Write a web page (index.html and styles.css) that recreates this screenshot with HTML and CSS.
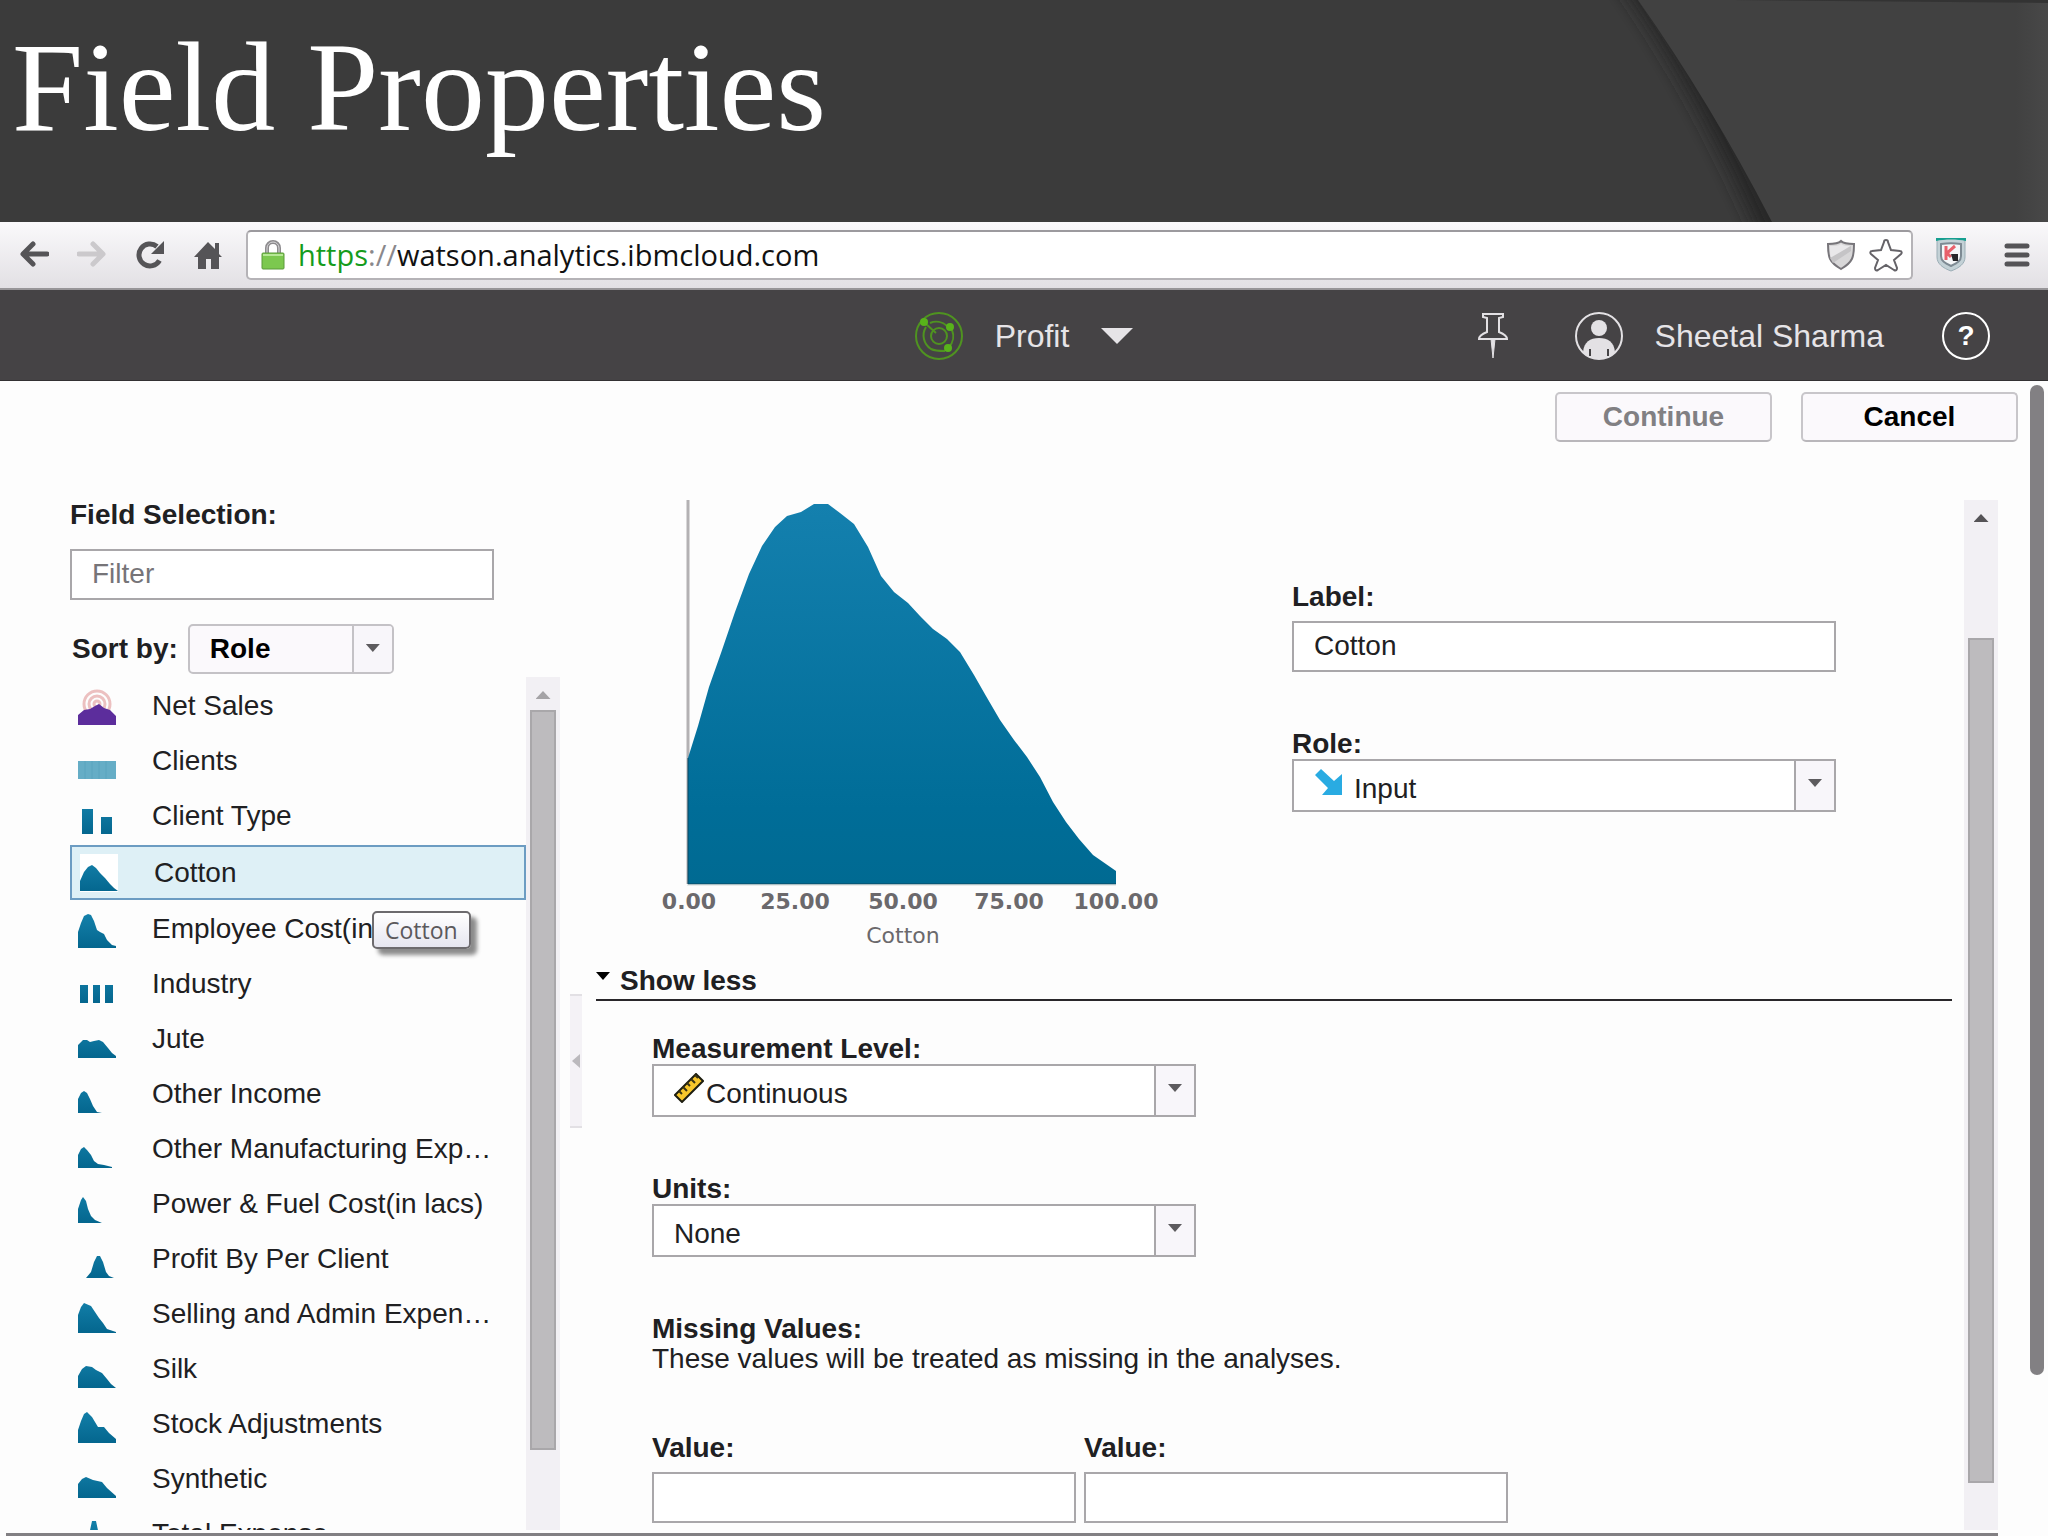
FILE: index.html
```html
<!DOCTYPE html>
<html lang="en">
<head>
<meta charset="utf-8">
<title>Field Properties</title>
<link rel="stylesheet" href="styles.css">
</head>
<body>
<svg class="defs" width="0" height="0" aria-hidden="true">
  <defs>
    <linearGradient id="area" x1="0" y1="0" x2="0" y2="1">
      <stop offset="0" stop-color="#1480ae"/><stop offset="0.8" stop-color="#006d98"/><stop offset="1" stop-color="#006a92"/>
    </linearGradient>
    <linearGradient id="mini" gradientUnits="userSpaceOnUse" x1="0" y1="0" x2="0" y2="38">
      <stop offset="0" stop-color="#1684ae"/><stop offset="1" stop-color="#04668e"/>
    </linearGradient>
  </defs>
</svg>

<header class="title-bar">
  <svg class="title-decor" viewBox="0 0 450 222" aria-hidden="true">
    <defs>
      <filter id="soft" x="-30%" y="-10%" width="160%" height="120%"><feGaussianBlur stdDeviation="9"/></filter>
      <linearGradient id="panel" x1="0" x2="1" y1="0" y2="0"><stop offset="0" stop-color="#414141"/><stop offset="0.92" stop-color="#414141"/><stop offset="1" stop-color="#484848"/></linearGradient>
    </defs>
    <path d="M20 -20 Q100 92 168 250 H240 L100 -20Z" fill="#252525" filter="url(#soft)"/>
    <path d="M40 0 Q112 102 174 222 H450 V0Z" fill="url(#panel)"/>
    <path d="M135 0H450V3Z" fill="#333"/>
  </svg>
  <h1 class="title">Field Properties</h1>
</header>

<nav class="browser-bar" aria-label="Browser">
  <div class="nav-buttons">
    <button class="nav-button" aria-label="Back"><svg width="30" height="28" viewBox="0 0 30 28"><path d="M14 4 4 14l10 10M5 14h23" fill="none" stroke="#555457" stroke-width="5" stroke-linecap="round" stroke-linejoin="round"/></svg></button>
    <button class="nav-button" aria-label="Forward"><svg width="30" height="28" viewBox="0 0 30 28"><path d="M16 4l10 10-10 10M25 14H2" fill="none" stroke="#cbc9cc" stroke-width="5" stroke-linecap="round" stroke-linejoin="round"/></svg></button>
    <button class="nav-button" aria-label="Reload"><svg width="32" height="30" viewBox="0 0 32 30"><path d="M25.500 20.500A11 11 0 1 1 23 6.500" fill="none" stroke="#555457" stroke-width="5"/><path d="M30 1v13H17Z" fill="#555457"/></svg></button>
    <button class="nav-button" aria-label="Home"><svg width="30" height="30" viewBox="0 0 30 30"><path d="M15 2 1 17h4v12h8V19h5v10h8V17h3l-3-3V3h-4v6Z" fill="#555457"/></svg></button>
  </div>
  <div class="address">
    <svg width="24" height="30" viewBox="0 0 24 30" aria-hidden="true"><path d="M6 15V8a6 6 0 0 1 12 0v7" fill="none" stroke="#8d8b8e" stroke-width="4"/><path d="M6 15V8a6 6 0 0 1 12 0v7" fill="none" stroke="#d9d8da" stroke-width="1"/><rect x="1" y="13" width="22" height="16" rx="1" fill="#7cc84f" stroke="#5b9a3b"/><path d="M2 15h20" stroke="#b6e796" stroke-width="2"/></svg>
    <label class="address-prefix" for="url"><span class="secure">https</span><span class="slashes">://</span></label>
    <input class="address-input" id="url" type="text" value="watson.analytics.ibmcloud.com">
    <svg class="shield" width="30" height="32" viewBox="0 0 30 32" aria-hidden="true"><path d="M15 2c3 3 8 3 13 3 0 13-1 18-13 25C3 23 2 18 2 5c5 0 10 0 13-3Z" fill="#d8d7d8" stroke="#77757a" stroke-width="2"/><path d="M15 5c3 2 6 2 9 2L5 20C4 16 4 12 4 7c5 0 8 0 11-2Z" fill="#e9e8ea"/><path d="M4 19 25 7v5L7 24Z" fill="#c5c4c6"/></svg>
    <svg width="34" height="34" viewBox="0 0 34 34" aria-hidden="true"><path d="M17 2c1 0 2 1 2 2l3 8 9 1c2 0 2 2 1 3l-7 6 3 8c0 2-1 3-3 2l-8-5-8 5c-2 1-3 0-3-2l3-8-7-6c-1-1-1-3 1-3l9-1 3-8c0-1 1-2 2-2Z" fill="#fff" stroke="#656368" stroke-width="2"/></svg>
  </div>
  <svg class="extension" width="32" height="36" viewBox="0 0 32 36" aria-hidden="true"><path d="M2 3c8-2 20-2 28 0v17c0 7-6 11-14 14C8 31 2 27 2 20Z" fill="#c3d1d6" stroke="#9aadb5"/><path d="M1 1h30v3c-8-2-22-2-30 0Z" fill="#169f90"/><path d="M6 7c7-1 13-1 20 0v12c0 5-4 7-10 10C10 26 6 24 6 19Z" fill="#f4f6f8" stroke="#7d8a93" stroke-width="2"/><path d="M11 9v14M20 9l-8 7 4 4" fill="none" stroke="#e8606b" stroke-width="3"/><path d="M16 17h7v7h-5Z" fill="#26262a"/></svg>
  <button class="menu-button" aria-label="Menu"><svg width="26" height="26" viewBox="0 0 26 26"><path d="M3 4h20M3 13h20M3 22h20" stroke="#555457" stroke-width="5" stroke-linecap="round"/></svg></button>
</nav>

<header class="app-bar">
  <button class="project">
    <svg width="48" height="48" viewBox="0 0 48 48" aria-hidden="true"><g fill="none" stroke="#4f9320" stroke-width="2"><circle cx="24" cy="24" r="23"/><path d="M11 15a16 16 0 0 0 5 22c4 2 9 2 14 2M15 11a16 16 0 0 1 17 3M37 18a16 16 0 0 1-3 17M11 12l10 9"/><circle cx="24" cy="24" r="8"/></g><g fill="#58b31a"><circle cx="9" cy="10" r="4"/><circle cx="35" cy="15" r="4"/><circle cx="33" cy="36" r="4"/></g></svg>
    <span>Profit</span>
    <svg width="32" height="16" viewBox="0 0 32 16" aria-hidden="true"><path d="M0 0h32L16 16Z" fill="#e6e4e7"/></svg>
  </button>
  <div class="account">
    <button class="icon-button" aria-label="Pin"><svg width="32" height="46" viewBox="0 0 32 46"><path d="M6 1h20v3l-4 1v14c5 2 8 4 8 7H2c0-3 3-5 8-7V5L6 4Z" fill="none" stroke="#e3e1e4" stroke-width="2"/><path d="M14 26h4l-2 19Z" fill="#e3e1e4" stroke="#e3e1e4"/></svg></button>
    <button class="user"><svg width="48" height="48" viewBox="0 0 48 48" aria-hidden="true"><circle cx="24" cy="24" r="23" fill="none" stroke="#e3e1e4" stroke-width="2"/><circle cx="24" cy="16" r="8" fill="#e3e1e4"/><path d="M8 40c1-10 7-14 16-14s15 4 16 14c-4 5-9 7-16 7S12 45 8 40Z" fill="#e3e1e4"/><path d="M15 37v7M33 37v7" stroke="#454345" stroke-width="2"/></svg><span>Sheetal Sharma</span></button>
    <button class="help" aria-label="Help">?</button>
  </div>
</header>

<div class="app">
  <div class="workspace">
    <div class="actions">
      <button class="action" disabled>Continue</button>
      <button class="action">Cancel</button>
    </div>
    <div class="panels">
      <aside class="sidebar">
        <label class="caption" for="filter">Field Selection:</label>
        <input class="text-box filter" id="filter" type="text" placeholder="Filter">
        <div class="sort">
          <label class="caption" for="sort">Sort by:</label>
          <div class="select-box sort-box">
            <select class="select" id="sort"><option>Role</option></select>
            <span class="select-arrow"></span>
          </div>
        </div>
        <div class="list-area">
          <ul class="fields">
            <li><button class="field"><svg class="thumb" viewBox="0 0 38 38"><g fill="none" stroke="#ecc0c0" stroke-width="3"><circle cx="19" cy="17" r="13"/><circle cx="19" cy="17" r="8"/><circle cx="19" cy="17" r="3"/></g><path d="M0 38V28l6-5 6-1 5-3 4-2 5 4 6 2 6 6v9Z" fill="#5c2d9c"/></svg><span class="field-name">Net Sales</span></button></li>
            <li><button class="field"><svg class="thumb" viewBox="0 0 38 38"><path d="M0 19h38v18H0Z" fill="#65adc6"/><path d="M7 19v18M14 19v18M21 19v18M28 19v18" stroke="#5aa4be"/></svg><span class="field-name">Clients</span></button></li>
            <li><button class="field"><svg class="thumb" viewBox="0 0 38 38"><path d="M4 12h11v25H4ZM23 20h11v17H23Z" fill="url(#mini)"/></svg><span class="field-name">Client Type</span></button></li>
            <li><button class="field selected" aria-current="true"><svg class="thumb" viewBox="0 0 38 38"><path d="M0 37V27L4 18 8 13 12 11 16 14 20 19 25 24 30 30 34 34 38 37Z" fill="url(#mini)"/></svg><span class="field-name">Cotton</span></button></li>
            <li><button class="field"><svg class="thumb" viewBox="0 0 38 38"><path d="M0 38V22L3 13 6 6 10 4 13 5 16 11 19 20 22 22 26 24 29 30 34 35 38 36v2Z" fill="url(#mini)"/></svg><span class="field-name">Employee Cost(in lacs)</span>
              <span class="tooltip" role="tooltip">Cotton</span></button></li>
            <li><button class="field"><svg class="thumb" viewBox="0 0 38 38"><path d="M2 20h8v18H2ZM15 20h7v18H15ZM27 20h8v18H27Z" fill="url(#mini)"/></svg><span class="field-name">Industry</span></button></li>
            <li><button class="field"><svg class="thumb" viewBox="0 0 38 38"><path d="M0 38V25L5 20 9 20 12 22 16 21 21 20 25 22 30 28 34 33 38 36v2Z" fill="url(#mini)"/></svg><span class="field-name">Jute</span></button></li>
            <li><button class="field"><svg class="thumb" viewBox="0 0 38 38"><path d="M0 38V24L3 18 6 16 9 18 12 24 15 31 19 37 24 38Z" fill="url(#mini)"/></svg><span class="field-name">Other Income</span></button></li>
            <li><button class="field"><svg class="thumb" viewBox="0 0 38 38"><path d="M0 38V25L3 19 6 17 9 20 13 25 16 31 20 34 26 35 34 37V38Z" fill="url(#mini)"/></svg><span class="field-name">Other Manufacturing Exp…</span></button></li>
            <li><button class="field"><svg class="thumb" viewBox="0 0 38 38"><path d="M0 38V24L3 15 5 12 8 16 10 24 13 31 17 35 24 38Z" fill="url(#mini)"/></svg><span class="field-name">Power &amp; Fuel Cost(in lacs)</span></button></li>
            <li><button class="field"><svg class="thumb" viewBox="0 0 38 38"><path d="M8 38 13 32 16 22 19 16 22 16 25 22 28 32 31 36 36 38Z" fill="url(#mini)"/></svg><span class="field-name">Profit By Per Client</span></button></li>
            <li><button class="field"><svg class="thumb" viewBox="0 0 38 38"><path d="M0 38V20L3 12 6 8 13 11 17 17 21 23 25 28 29 34 38 37v1Z" fill="url(#mini)"/></svg><span class="field-name">Selling and Admin Expen…</span></button></li>
            <li><button class="field"><svg class="thumb" viewBox="0 0 38 38"><path d="M0 38V26L4 19 8 16 14 17 18 20 24 23 29 29 33 34 38 38Z" fill="url(#mini)"/></svg><span class="field-name">Silk</span></button></li>
            <li><button class="field"><svg class="thumb" viewBox="0 0 38 38"><path d="M0 38V25L3 16 6 9 9 7 14 12 17 17 20 22 26 22 31 28 38 34v4Z" fill="url(#mini)"/></svg><span class="field-name">Stock Adjustments</span></button></li>
            <li><button class="field"><svg class="thumb" viewBox="0 0 38 38"><path d="M0 38V24L4 19 8 17 15 20 24 22 29 28 38 36v2Z" fill="url(#mini)"/></svg><span class="field-name">Synthetic</span></button></li>
            <li><button class="field"><svg class="thumb" viewBox="0 0 38 38"><path d="M8 38 11 20 14 6 18 6 21 20 24 38Z" fill="url(#mini)"/></svg><span class="field-name">Total Expense</span></button></li>
          </ul>
          <div class="scroll-track list-track"><span class="scroll-up muted"></span><span class="scroll-thumb"></span><span class="scroll-rest"></span></div>
        </div>
      </aside>

      <button class="splitter" aria-label="Collapse field list"><span class="splitter-arrow"></span></button>

      <main class="details">
        <section class="overview">
          <svg class="chart" width="510" height="466" viewBox="1 1 510 466" role="img" aria-label="Distribution of Cotton">
            <path d="M33 1V385" stroke="#b3b1b3" stroke-width="3"/>
            <path d="M33 385V259L43 227 54 188 66 154 80 113 94 75 107 47 120 28 132 17 146 13 159 5H173L185 14 199 25 213 48 226 77 239 93 253 104 265 117 278 130 292 140 305 153 319 176 331 197 345 221 359 241 372 258 385 278 398 303 411 323 424 340 438 356 461 372V385Z" fill="url(#area)"/>
            <path d="M33 259V385H461" fill="none" stroke="#0b4660" stroke-width="1"/>
            <path d="M32 386H461" stroke="#d3dad9" stroke-width="1"/>
            <g class="ticks" text-anchor="middle">
              <text x="34" y="410">0.00</text><text x="140" y="410">25.00</text><text x="248" y="410">50.00</text><text x="354" y="410">75.00</text><text x="461" y="410">100.00</text>
            </g>
            <text class="axis-name" x="248" y="444" text-anchor="middle">Cotton</text>
          </svg>
          <div class="form identity">
            <div class="entry">
              <label class="caption" for="label">Label:</label>
              <input class="text-box spaced" id="label" type="text" value="Cotton">
            </div>
            <div class="entry">
              <label class="caption" for="role">Role:</label>
              <div class="select-box">
                <svg class="select-icon" width="30" height="28" viewBox="0 0 30 28" aria-hidden="true"><path d="M1 7 7 1l13 12 8-7v21H8l6-7Z" fill="#29abe2"/></svg>
                <select class="select with-icon role-select" id="role"><option>Input</option></select>
                <span class="select-arrow"></span>
              </div>
            </div>
          </div>
        </section>

        <button class="disclosure" aria-expanded="true"><span class="disclosure-arrow"></span>Show less</button>

        <section class="form more">
          <div class="entry">
            <label class="caption" for="level">Measurement Level:</label>
            <div class="select-box">
              <svg class="select-icon" width="30" height="30" viewBox="0 0 30 30" aria-hidden="true"><path d="M1 22 22 1l7 7L8 29Z" fill="#f7c62b" stroke="#1d1d10" stroke-width="2"/><path d="m5 18 3 3m1-7 4 4m0-8 3 3m1-7 4 4m0-8 3 3" stroke="#3a3414" stroke-width="2"/></svg>
              <select class="select with-icon" id="level"><option>Continuous</option></select>
              <span class="select-arrow"></span>
            </div>
          </div>
          <div class="entry">
            <label class="caption" for="units">Units:</label>
            <div class="select-box">
              <select class="select" id="units"><option>None</option></select>
              <span class="select-arrow"></span>
            </div>
          </div>
          <div class="entry">
            <h2 class="caption">Missing Values:</h2>
            <p class="note">These values will be treated as missing in the analyses.</p>
          </div>
          <div class="values">
            <div class="value"><label class="caption" for="value1">Value:</label><input class="text-box spaced" id="value1" type="text"></div>
            <div class="value"><label class="caption" for="value2">Value:</label><input class="text-box spaced" id="value2" type="text"></div>
          </div>
        </section>
      </main>

      <div class="scroll-track details-track"><span class="scroll-up"></span><span class="scroll-gap"></span><span class="scroll-thumb"></span><span class="scroll-rest"></span></div>
    </div>
    <div class="baseline"></div>
  </div>
  <div class="page-scroll"><span class="page-thumb"></span></div>
</div>
</body>
</html>
```
FILE: styles.css
```css
* { box-sizing: border-box; }

body {
  margin: 0;
  height: 100vh;
  display: flex;
  flex-direction: column;
  overflow: hidden;
  background: #fdfdfd;
  color: #202022;
  font: 28px/30px "Liberation Sans", Arial, sans-serif;
}

button, input, select { font: inherit; color: inherit; }
button { margin: 0; padding: 0; border: 0; background: none; }
svg { display: block; flex: none; }
.defs { position: absolute; }

/* Title */
.title-bar {
  position: relative;
  flex: none;
  height: 222px;
  padding: 16px 12px 0;
  background: #3b3b3b;
  overflow: hidden;
}
.title-decor { position: absolute; top: 0; right: 0; height: 222px; }
.title {
  position: relative;
  margin: 0;
  color: #fff;
  font: 128px/142px "Liberation Serif", "Times New Roman", serif;
}

/* Browser bar */
.browser-bar {
  flex: none;
  display: flex;
  align-items: center;
  height: 68px;
  padding: 0 18px 0 5px;
  background: linear-gradient(#faf9fb, #e2e0e4);
  border-bottom: 2px solid #979598;
}
.nav-buttons { display: flex; }
.nav-button { display: flex; justify-content: center; width: 58px; }
.address {
  flex: 1;
  display: flex;
  align-items: center;
  height: 50px;
  margin: 0 22px 0 9px;
  padding: 0 8px 0 13px;
  background: #fff;
  border: 2px solid #b5b3b7;
  border-top-color: #9c9a9e;
  border-radius: 5px;
  font: 29px/40px "Open Sans", "Noto Sans", sans-serif;
}
.address-prefix { margin-left: 13px; }
.secure { color: #159c1c; }
.slashes { color: #8a888c; }
.address-input { flex: 1; min-width: 0; padding: 0; border: 0; background: none; color: #111; }
.shield { margin-right: 13px; }
.extension { margin-right: 37px; }

/* Application bar */
.app-bar {
  flex: none;
  display: grid;
  grid-template-columns: 1fr auto 1fr;
  align-items: center;
  height: 91px;
  padding-top: 2px;
  background: #454345;
  border-bottom: 1px solid #333133;
  color: #e6e4e7;
  font-size: 32px;
  line-height: 40px;
}
.project { grid-column: 2; display: flex; align-items: center; gap: 32px; }
.account { display: flex; justify-content: flex-end; align-items: center; padding-right: 58px; }
.user { display: flex; align-items: center; gap: 32px; margin: 0 58px 0 66px; }
.help {
  width: 48px;
  height: 48px;
  border: 2px solid #fff;
  border-radius: 50%;
  color: #fff;
  font-size: 28px;
  line-height: 44px;
  font-weight: bold;
}

/* Workspace */
.app { flex: 1; min-height: 0; display: flex; }
.workspace { flex: 1; min-width: 0; display: flex; flex-direction: column; }
.actions { flex: none; display: flex; justify-content: flex-end; gap: 29px; padding: 11px 12px 58px 0; }
.action {
  width: 217px;
  height: 50px;
  border: 2px solid #c8c6ca;
  border-bottom-color: #b9b7bb;
  border-radius: 5px;
  background: #fbf9fc;
  color: #000;
  font-weight: bold;
}
.action:disabled { color: #818083; }
.panels { flex: 1; min-height: 0; display: flex; padding: 0 32px 0 70px; }
.caption { display: block; margin: 0; font-size: 28px; line-height: 30px; font-weight: bold; }

.text-box {
  display: block;
  width: 100%;
  height: 51px;
  padding: 0 20px 2px;
  border: 2px solid #a9a7aa;
  background: #fff;
}
.text-box::placeholder { color: #767478; opacity: 1; }
.spaced { margin-top: 9px; }

.select-box {
  position: relative;
  display: flex;
  height: 53px;
  border: 2px solid #a9a7aa;
  background: #fff;
}
.select {
  appearance: none;
  flex: 1;
  min-width: 0;
  border: 0;
  padding: 6px 0 0 20px;
  background: none;
}
.select.with-icon { padding-left: 52px; }
.select.role-select { padding-left: 60px; }
.select-icon { position: absolute; left: 20px; top: 7px; }
.select-arrow { flex: none; width: 40px; border-left: 2px solid #a9a7aa; background: #f8f6fa; display: flex; justify-content: center; padding-top: 18px; }
.select-arrow::after { content: ""; width: 14px; height: 8px; background: #5d5b5e; clip-path: polygon(0 0, 100% 0, 50% 100%); }

/* Sidebar */
.sidebar { flex: none; width: 490px; display: flex; flex-direction: column; }
.filter { width: 424px; margin-top: 19px; flex: none; }
.sort { display: flex; align-items: center; gap: 10px; padding: 24px 0 3px 2px; }
.sort-box {
  width: 206px;
  height: 50px;
  border-color: #c4c2c6;
  border-radius: 5px;
  background: #fbf9fc;
  font-weight: bold;
  color: #000;
  overflow: hidden;
}
.sort-box .select { padding-top: 0; }
.sort-box .select-arrow { border-color: #c4c2c6; }

.list-area { flex: 1; min-height: 0; display: flex; }
.fields { flex: 1; min-width: 0; margin: 0; padding: 1px 0 0; list-style: none; overflow: hidden; }
.field {
  position: relative;
  display: flex;
  align-items: center;
  gap: 36px;
  width: 100%;
  height: 55px;
  padding-left: 8px;
  text-align: left;
}
.field.selected { margin: 2px 0 1px; border: 2px solid #6c9cc2; background: #def0f6; }
.selected .thumb { background: #fff; }
.thumb { width: 38px; height: 38px; }
.field-name { white-space: nowrap; }
.tooltip {
  position: absolute;
  left: 302px;
  top: 10px;
  padding: 0 11px;
  border: 2px solid #6d6b6e;
  border-radius: 5px;
  background: linear-gradient(#fff, #e6e6f0);
  box-shadow: 6px 6px 4px rgba(0, 0, 0, 0.45);
  color: #5b595c;
  font: 23px/34px "Open Sans", "Noto Sans", sans-serif;
}

/* Scroll bars */
.scroll-track { flex: none; width: 34px; padding: 0 4px; background: #f2f0f4; display: flex; flex-direction: column; }
.scroll-up { flex: none; height: 33px; display: flex; justify-content: center; padding-top: 14px; }
.scroll-up::after { content: ""; width: 15px; height: 8px; background: #555356; clip-path: polygon(50% 0, 100% 100%, 0 100%); }
.scroll-up.muted::after { background: #a5a3a6; }
.scroll-thumb { background: #bdbbbe; border: 2px solid #a9a7aa; }
.list-track .scroll-thumb { flex: 740; }
.list-track .scroll-rest { flex: 80; }
.details-track .scroll-gap { flex: 105; }
.details-track .scroll-thumb { flex: 845; }
.details-track .scroll-rest { flex: 47; }
.page-scroll { flex: none; width: 18px; padding: 4px 4px 0 0; }
.page-thumb { display: block; height: 86%; border-radius: 7px; background: #828083; }
.baseline { flex: none; height: 3px; margin: 3px 32px 0 6px; background: #828083; }

.splitter {
  flex: none;
  display: flex;
  align-items: center;
  justify-content: center;
  width: 12px;
  height: 134px;
  margin: 494px 14px 0 10px;
  background: #f4f2f6;
  border: solid #e2e0e4;
  border-width: 2px 0;
}
.splitter-arrow { width: 8px; height: 14px; background: #bbb9bd; clip-path: polygon(100% 0, 100% 100%, 0 50%); }

/* Details */
.details { flex: 1; min-width: 0; overflow: hidden; }
.overview { display: flex; gap: 126px; padding-left: 60px; }
.ticks { font: bold 22px "DejaVu Sans", sans-serif; fill: #6b696c; }
.axis-name { font: 22px "DejaVu Sans", sans-serif; fill: #6b696c; }
.form { display: flex; flex-direction: column; gap: 57px; }
.entry { width: 544px; }
.identity { padding-top: 82px; }
.disclosure {
  display: flex;
  gap: 10px;
  width: calc(100% - 12px);
  padding-bottom: 3px;
  border-bottom: 2px solid #29272a;
  font-weight: bold;
}
.disclosure-arrow { width: 14px; height: 8px; margin-top: 6px; background: #000; clip-path: polygon(0 0, 100% 0, 50% 100%); }
.more { padding: 33px 0 0 56px; }
.note { margin: 0; white-space: nowrap; }
.values { display: flex; gap: 8px; padding-top: 2px; }
.value { width: 424px; }
```
